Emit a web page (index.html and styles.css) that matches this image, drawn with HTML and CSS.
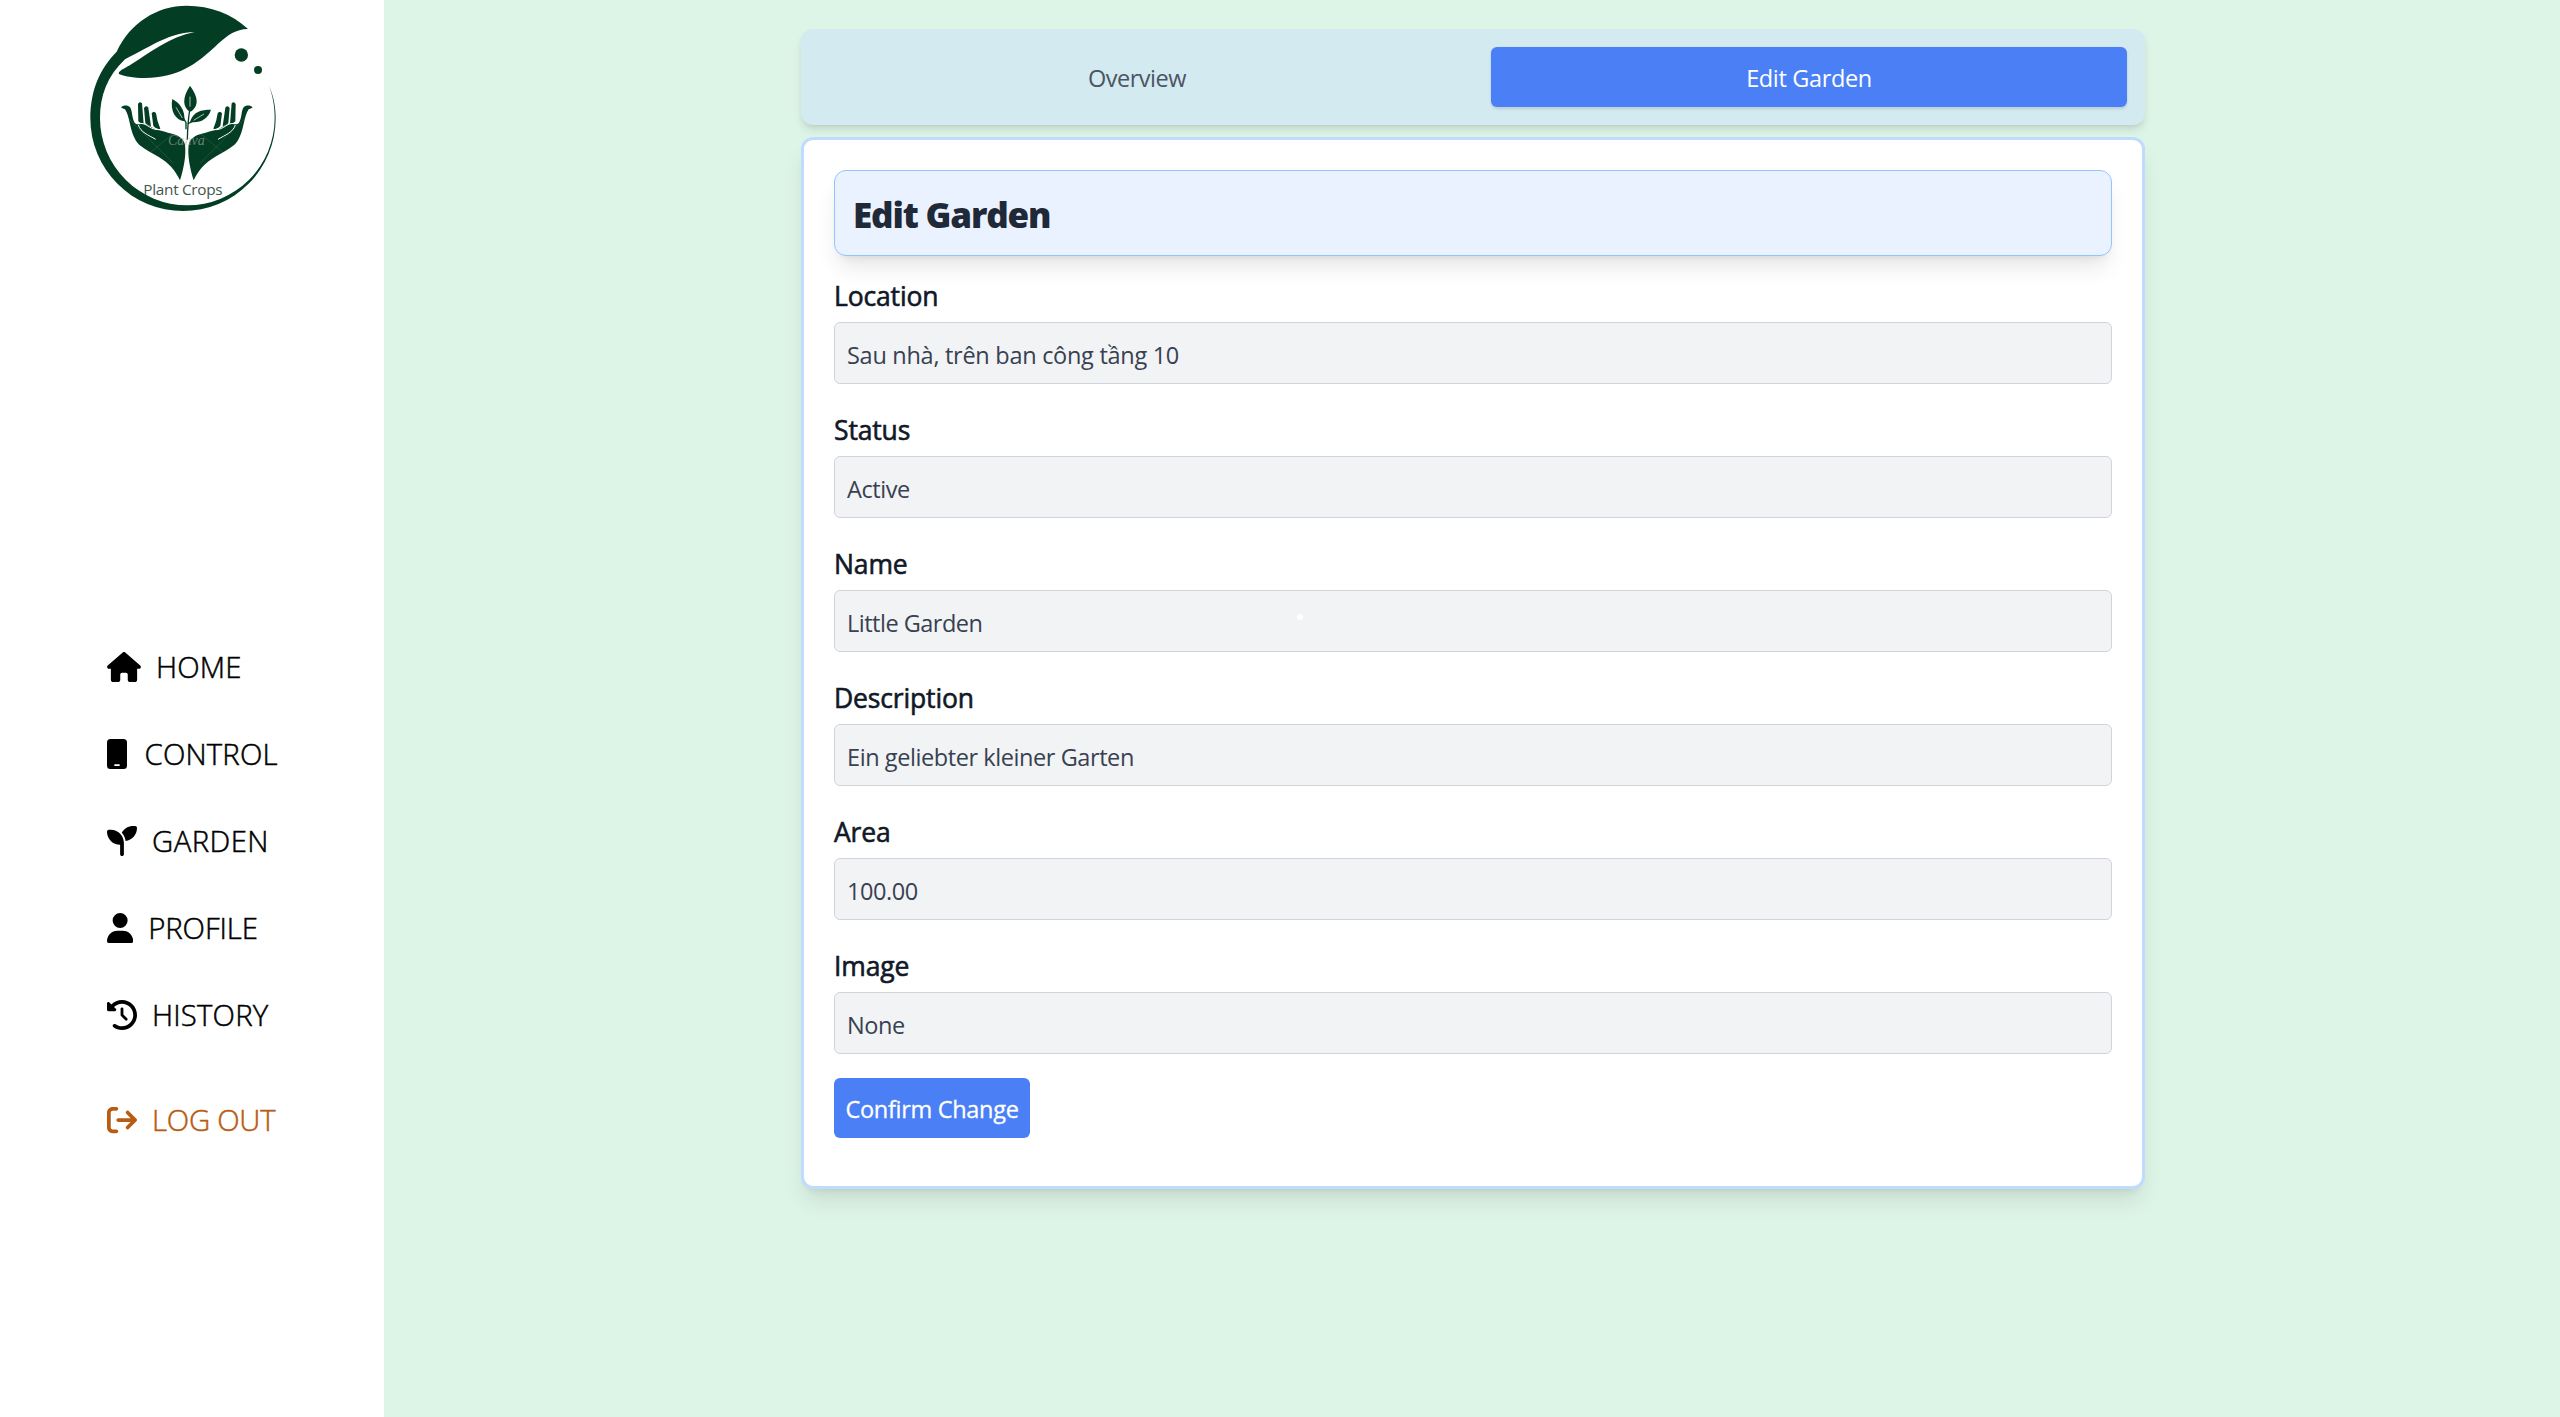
FILE: index.html
```html
<!DOCTYPE html>
<html lang="en">
<head>
<meta charset="utf-8">
<title>Edit Garden</title>
<link rel="stylesheet" href="styles.css">
</head>
<body>
<div class="app">
  <aside class="sidebar">
    <div class="brand">
      <svg class="logo" viewBox="0 0 690 660" fill="#033d24">
        <path d="M140 155C180 68 262 17 350 17C422 17 486 42 534 87C496 88 476 104 446 130C378 196 320 234 225 234C190 234 160 228 147 222Q144 218 151 213C160 206 168 203 184 193C244 155 300 110 374 96C300 98 250 134 165 178C112 228 90 288 90 354A262 262 0 0 0 352 616A262 262 0 0 0 614 354C614 320 609 290 597 257C611 288 617 322 617 355A278 278 0 0 1 61 355C61 270 90 205 140 155Z"/>
        <circle cx="514" cy="165" r="20"/><circle cx="564" cy="210" r="12"/>
        <g id="hand">
          <path d="M153 322C160 315 174 315 180 322C188 333 185 355 194 368C202 378 210 370 222 371C236 374 247 384 259 389C275 391 290 397 306 401C327 406 341 416 345 434C349 468 341 505 330 541C316 511 298 490 265 470C234 452 207 440 197 421C179 391 180 350 165 328Q158 326 153 322Z"/>
          <path d="M204 312Q209 302 216 310L221 372Q212 372 205 364Z"/>
          <path d="M222 324Q228 314 235 323L243 379Q234 377 226 370Z"/>
          <path d="M245 340Q252 331 258 340Q261 365 271 386Q259 389 250 378Z"/>
          <path d="M205 375C212 397 235 405 257 418" fill="none" stroke="#fff" stroke-width="3"/>
          <path d="M208 371C230 367 236 387 262 389" fill="none" stroke="#fff" stroke-width="3"/>
        </g>
        <use href="#hand" transform="matrix(-1 0 0 1 701 0)"/>
        <path d="M360 257C377 281 389 306 372 326Q366 334 360 335C338 322 336 293 360 257Z"/>
        <path d="M307 297C329 309 346 330 343 364C316 360 300 333 307 297Z"/>
        <path d="M360 366C369 334 394 329 423 329C414 357 391 370 360 366Z"/>
        <path d="M359 330Q353 369 352 419M324 325L348 368V388M352 372Q374 362 398 347" fill="none" stroke="#033d24" stroke-width="4"/>
        <path d="M360 290V320M318 322L337 354M371 361L402 342" fill="none" stroke="#fff" stroke-width="2"/>
        <path d="M170 350L310 490M310 400L220 475M530 350L390 490M390 400L480 475" fill="none" stroke="#fff" stroke-opacity=".16" stroke-width="2"/>
        <text class="watermark" x="294" y="434" textLength="110">Canva</text>
        <text class="tagline" x="220" y="584" textLength="238">Plant Crops</text>
      </svg>
    </div>
    <nav class="menu">
      <a class="item"><svg class="icon" width="34" height="30" viewBox="0 0 576 512"><path d="M575.8 255.5c0 18-15 32.1-32 32.1h-32l.7 160.2c0 2.7-.2 5.4-.5 8.1V472c0 22.1-17.9 40-40 40H456c-1.1 0-2.2 0-3.3-.1c-1.4 .1-2.8 .1-4.2 .1H416 392c-22.1 0-40-17.9-40-40V448 384c0-17.7-14.3-32-32-32H256c-17.7 0-32 14.3-32 32v64 24c0 22.1-17.9 40-40 40H160 128.1c-1.5 0-3-.1-4.5-.2c-1.2 .1-2.4 .2-3.6 .2H104c-22.1 0-40-17.9-40-40V360c0-.9 0-1.9 .1-2.8V287.6H32c-18 0-32-14-32-32.1c0-9 3-17 10-24L266.4 8c7-7 15-8 22-8s15 2 21 7L564.8 231.5c8 7 12 15 11 24z"/></svg><span>HOME</span></a>
      <a class="item"><svg class="icon" width="22.5" height="30" viewBox="0 0 22.5 30"><path fill-rule="evenodd" d="M3.500 0H16.500A3.500 3.500 0 0 1 20 3.500V26.500A3.500 3.500 0 0 1 16.500 30H3.500A3.500 3.500 0 0 1 0 26.500V3.500A3.500 3.500 0 0 1 3.500 0ZM8 25.200A.9.900 0 0 0 8 27H12A.9.900 0 0 0 12 25.200Z"/></svg><span>CONTROL</span></a>
      <a class="item garden"><svg class="icon" width="30" height="30" viewBox="0 0 512 512"><path d="M512 32c0 113.600-84.600 207.500-194.200 222c-7.100-53.400-30.600-101.600-65.300-139.300C290.800 46.300 364 0 448 0h32c17.700 0 32 14.300 32 32zM0 96C0 78.300 14.300 64 32 64H64c123.700 0 224 100.300 224 224v32V480c0 17.700-14.300 32-32 32s-32-14.300-32-32V320C100.300 320 0 219.700 0 96z"/></svg><span>GARDEN</span></a>
      <a class="item profile"><svg class="icon" width="26.25" height="30" viewBox="0 0 448 512"><path d="M224 256A128 128 0 1 0 224 0a128 128 0 1 0 0 256zm-45.700 48C79.800 304 0 383.800 0 482.300C0 498.700 13.300 512 29.700 512H418.300c16.400 0 29.700-13.300 29.700-29.700C448 383.800 368.200 304 269.700 304H178.300z"/></svg><span>PROFILE</span></a>
      <a class="item"><svg class="icon" width="30" height="30" viewBox="0 0 512 512"><path d="M75 75L41 41C25.900 25.900 0 36.600 0 57.900V168c0 13.300 10.700 24 24 24H134.100c21.400 0 32.100-25.900 17-41l-30.800-30.800C155 85.500 203 64 256 64c106 0 192 86 192 192s-86 192-192 192c-40.800 0-78.600-12.700-109.700-34.400c-14.500-10.100-34.400-6.600-44.600 7.900s-6.600 34.400 7.900 44.600C151.200 495 201.700 512 256 512c141.400 0 256-114.600 256-256S397.400 0 256 0C185.300 0 121.300 28.700 75 75zm181 53c-13.300 0-24 10.700-24 24V256c0 6.400 2.500 12.500 7 17l72 72c9.400 9.400 24.600 9.400 33.900 0s9.400-24.600 0-33.900l-65-65V152c0-13.300-10.700-24-24-24z"/></svg><span>HISTORY</span></a>
      <a class="item logout"><svg class="icon" width="30" height="30" viewBox="0 0 512 512"><path d="M502.600 278.600c12.500-12.500 12.500-32.800 0-45.300l-128-128c-12.500-12.500-32.800-12.500-45.300 0s-12.500 32.800 0 45.300L402.700 224 192 224c-17.700 0-32 14.300-32 32s14.300 32 32 32l210.700 0-73.400 73.400c-12.500 12.500-12.500 32.800 0 45.300s32.800 12.500 45.300 0l128-128zM160 96c17.700 0 32-14.300 32-32s-14.300-32-32-32L96 32C43 32 0 75 0 128L0 384c0 53 43 96 96 96l64 0c17.700 0 32-14.300 32-32s-14.300-32-32-32l-64 0c-17.700 0-32-14.300-32-32l0-256c0-17.700 14.300-32 32-32l64 0z"/></svg><span>LOG OUT</span></a>
    </nav>
  </aside>
  <main class="content">
    <div class="tabs">
      <button class="tab">Overview</button>
      <button class="tab active">Edit Garden</button>
    </div>
    <form class="card">
      <h1 class="title">Edit Garden</h1>
      <div class="field"><label class="label">Location</label><div class="value location">Sau nhà, trên ban công tầng 10</div></div>
      <div class="field"><label class="label">Status</label><div class="value">Active</div></div>
      <div class="field"><label class="label">Name</label><div class="value name">Little Garden</div></div>
      <div class="field"><label class="label">Description</label><div class="value">Ein geliebter kleiner Garten</div></div>
      <div class="field"><label class="label">Area</label><div class="value">100.00</div></div>
      <div class="field"><label class="label">Image</label><div class="value">None</div></div>
      <button class="confirm" type="button">Confirm Change</button>
    </form>
  </main>
</div>
</body>
</html>
```
FILE: styles.css
```css
* { box-sizing: border-box; }
body { margin: 0; font-family: "Open Sans", "Noto Sans", sans-serif; font-size: 23.5px; color: #111827; }
button { font: inherit; border: 0; padding: 0; white-space: nowrap; }

.app { display: flex; height: 1417px; background: #ddf5e7; }

.sidebar { width: 384px; background: #fff; display: flex; flex-direction: column; }
.brand { height: 637px; padding-left: 70px; }
.logo { display: block; width: 230px; height: 220px; }
.watermark { font: italic 42px "Liberation Serif", serif; fill: #aab5af; fill-opacity: .6; }
.tagline { font: 46px "Open Sans", sans-serif; fill: #41564d; }

.menu { display: flex; flex-direction: column; gap: 27px; padding-left: 107px; }
.item { display: flex; align-items: center; gap: 15px; height: 60px; font-size: 29.3px; font-weight: 300; line-height: 60px; letter-spacing: .2px; white-space: nowrap; color: #000; -webkit-text-stroke: .5px currentColor; }
.item.garden { letter-spacing: .45px; }
.item.profile { letter-spacing: -.1px; }
.icon { flex: none; fill: currentColor; }
.item.logout { margin-top: 18px; letter-spacing: -.25px; color: #b85c14; }

.content { flex: 1; padding: 29px 0 0 417px; }
.tabs { width: 1344px; height: 96px; padding: 18px; display: flex; gap: 36px; background: #d2eaf0; border-radius: 12px; box-shadow: 0 6px 9px -1.5px rgba(0,0,0,.1), 0 3px 6px -3px rgba(0,0,0,.1); }
.tab { flex: 1; padding-top: 2px; border-radius: 6px; background: transparent; color: #4b5563; line-height: 58px; letter-spacing: -.5px; }
.tab.active { background: #4a7ff5; color: #fff; letter-spacing: -.35px; box-shadow: 0 1.5px 3px rgba(0,0,0,.12); }

.card { width: 1344px; height: 1052px; margin-top: 12px; padding: 30px; background: #fff; border: 3px solid #bfdbfe; border-radius: 12px; box-shadow: 0 15px 22.5px -4.5px rgba(0,0,0,.1), 0 6px 9px -6px rgba(0,0,0,.1); }
.title { margin: 0 0 18px; height: 86px; padding: 2px 0 0 18px; display: flex; align-items: center; background: #eaf2ff; border: 1px solid #93c5fd; border-radius: 12px; font-size: 35px; font-weight: 800; letter-spacing: -1.15px; color: #1f2937; box-shadow: 0 15px 22.5px -4.5px rgba(0,0,0,.1), 0 6px 9px -6px rgba(0,0,0,.1); }
.field { margin-bottom: 24px; }
.label { display: block; height: 48px; line-height: 45px; font-size: 26.5px; font-weight: 500; letter-spacing: -.15px; -webkit-text-stroke: .6px currentColor; }
.value { position: relative; height: 62px; padding-left: 12px; line-height: 64px; letter-spacing: -.42px; background: #f2f3f5; border: 1px solid #d1d5db; border-radius: 6px; color: #374151; }
.location { letter-spacing: -.28px; }
.name { letter-spacing: -.5px; }
/* highlight dot */
.name::after { content: ""; position: absolute; left: 462px; top: 23px; width: 6px; height: 6px; border-radius: 50%; background: #fff; }
.confirm { width: 196px; height: 60px; padding-top: 2px; border-radius: 6px; background: #4a7ff5; color: #fff; line-height: 58px; font-weight: 500; letter-spacing: -.3px; -webkit-text-stroke: .3px currentColor; }
```
